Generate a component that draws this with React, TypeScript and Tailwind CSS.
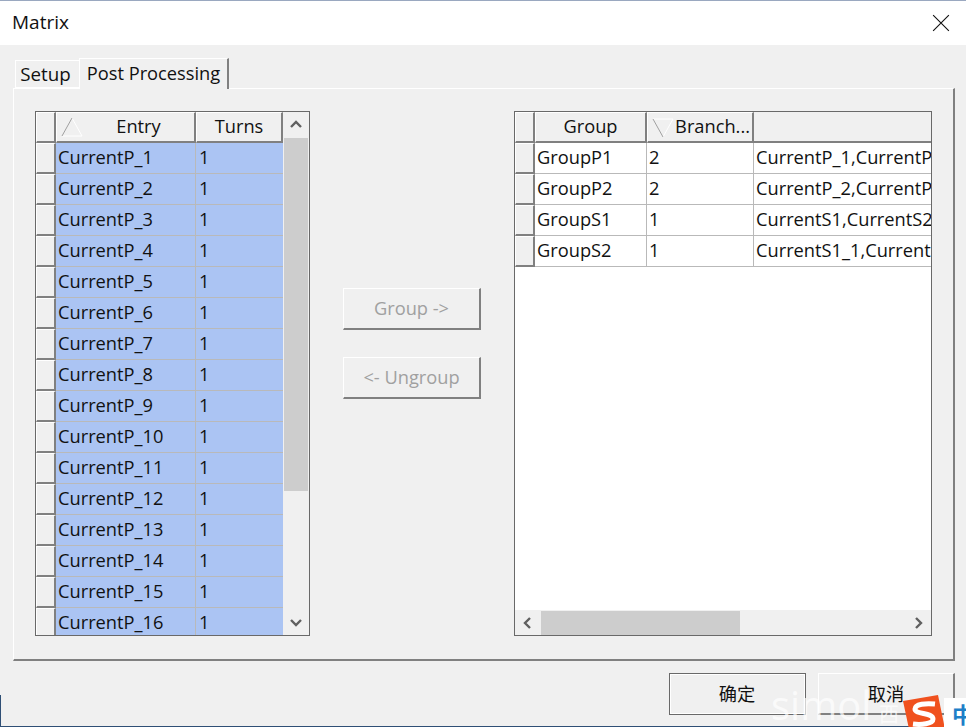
import React from 'react';

const FONT = { fontFamily: '"Open Sans", "Noto Sans CJK SC", sans-serif' };

const entries = Array.from({ length: 16 }, (_, i) => `CurrentP_${i + 1}`);

const groups = [
  { name: 'GroupP1', branches: '2', items: 'CurrentP_1,CurrentP_1_1' },
  { name: 'GroupP2', branches: '2', items: 'CurrentP_2,CurrentP_2_1' },
  { name: 'GroupS1', branches: '1', items: 'CurrentS1,CurrentS2,CurrentS3' },
  { name: 'GroupS2', branches: '1', items: 'CurrentS1_1,CurrentS2_1' },
];

const raised = 'border border-t-white border-l-white border-r-[#808080] border-b-[#808080] bg-[#f0f0f0]';

const Chevron = ({ dir }: { dir: 'up' | 'down' | 'left' | 'right' }) => {
  const d = {
    up: 'M2 9 L7 4 L12 9',
    down: 'M2 5 L7 10 L12 5',
    left: 'M9 2 L4 7 L9 12',
    right: 'M5 2 L10 7 L5 12',
  }[dir];
  return (
    <svg width="14" height="14" viewBox="0 0 14 14" fill="none">
      <path d={d} stroke="#606060" strokeWidth="2.4" />
    </svg>
  );
};

const SortUp = () => (
  <svg width="22" height="20" viewBox="0 0 22 20" fill="none">
    <path d="M11 1 L21 19 L1 19" stroke="#ffffff" />
    <path d="M11 1 L1 19" stroke="#a0a0a0" />
  </svg>
);

const SortDown = () => (
  <svg width="22" height="20" viewBox="0 0 22 20" fill="none">
    <path d="M1 1 L21 1 L11 19" stroke="#ffffff" />
    <path d="M1 1 L11 19" stroke="#a0a0a0" />
  </svg>
);

const SogouLogo = () => (
  <svg width="44" height="34" viewBox="0 0 44 34">
    <path d="M1 6 L36 0 L43 34 L7 34 Z" fill="#f0511e" />
    <path d="M33 9 C24 8 13 9 13 14 C13 20 31 17 31 24 C31 29 19 30 11 29" fill="none" stroke="#ffffff" strokeWidth="5" />
  </svg>
);

const HeaderCell = ({ width, children }: { width: string; children?: React.ReactNode }) => (
  <div className={`${width} h-full flex items-center justify-center pb-[2px] shrink-0 border-r-2 border-b-2 border-r-[#808080] border-b-[#808080] border-t border-l border-t-white border-l-white`}>
    {children}
  </div>
);

const RowHeader = () => (
  <div className="w-5 h-[31px] shrink-0 bg-[#f0f0f0] border-t border-l border-t-white border-l-white border-r-2 border-b-2 border-r-[#808080] border-b-[#808080]" />
);

export default function App() {
  return (
    <div className="relative w-full h-[727px] overflow-hidden bg-[#f0f0f0] text-[18.25px] text-[#111]" style={FONT}>
      <div className="h-[45px] bg-white border-t border-t-[#9aa8c0] flex items-center justify-between pl-[12px] pr-[16px]">
        <span className="text-[19px] pb-[2px]">Matrix</span>
        <svg width="18" height="18" viewBox="0 0 16 16" fill="none">
          <path d="M1 1 L15 15 M15 1 L1 15" stroke="#111" />
        </svg>
      </div>

      <div className="pr-[11px] pt-[13px] pl-[13px]">
        <div className="flex items-end h-[30px] pl-[2px]">
          <div className="w-[64px] h-[28px] pr-[4px] text-[18.75px] bg-[#f0f0f0] border-t border-l border-t-white border-l-white flex items-center justify-center border-b border-b-white">
            Setup
          </div>
          <div className="w-[150px] h-[31px] -mb-px pb-[3px] relative z-10 bg-[#f0f0f0] border-t border-l border-r-2 border-t-white border-l-white border-r-[#808080] flex items-center justify-center">
            Post Processing
          </div>
        </div>

        <div className="h-[573px] w-[942px] flex justify-between border border-t-white border-l-white border-r-2 border-b-2 border-r-[#808080] border-b-[#808080] pt-[22px] pl-[21px] pr-[21px]">
          {/* entries table */}
          <div className="w-[275px] h-[525px] border border-[#696969] flex overflow-hidden">
            <div className="w-[247px] flex flex-col">
              <div className="flex h-[31px] shrink-0">
                <HeaderCell width="w-5" />
                <div className="w-[140px] relative flex items-center justify-center pl-[26px] pb-[2px] border-t border-l border-t-white border-l-white border-r-2 border-b-2 border-r-[#808080] border-b-[#808080]">
                  <span className="absolute left-[4px] top-[4px]"><SortUp /></span>
                  Entry
                </div>
                <HeaderCell width="w-[87px]">Turns</HeaderCell>
              </div>
              {entries.map((name) => (
                <div key={name} className="flex h-[31px] shrink-0">
                  <RowHeader />
                  <div className="w-[140px] bg-[#abc4f3] border-r border-b border-[#b9b9b9] pl-[2px] pb-[2px] flex items-center">{name}</div>
                  <div className="w-[87px] bg-[#abc4f3] border-b border-[#b9b9b9] pl-[3px] pb-[2px] flex items-center">1</div>
                </div>
              ))}
            </div>
            <div className="w-[26px] flex flex-col items-center bg-[#f0f0f0]">
              <div className="h-[26px] w-full flex items-center justify-center shrink-0"><Chevron dir="up" /></div>
              <div className="w-[24px] h-[353px] bg-[#cdcdcd] shrink-0" />
              <div className="flex-1" />
              <div className="h-[27px] w-full flex items-center justify-center shrink-0"><Chevron dir="down" /></div>
            </div>
          </div>

          {/* group buttons */}
          <div className="flex flex-col gap-[27px] pt-[177px] text-[#a0a0a0]">
            <div className={`${raised} w-[138px] h-[42px] pb-[2px] flex items-center justify-center border-r-2 border-b-2`}>Group -&gt;</div>
            <div className={`${raised} w-[138px] h-[42px] pb-[2px] flex items-center justify-center border-r-2 border-b-2`}>&lt;- Ungroup</div>
          </div>

          {/* groups table */}
          <div className="w-[418px] h-[525px] border border-[#696969] bg-white flex flex-col overflow-hidden">
            <div className="flex h-[31px] shrink-0 bg-[#f0f0f0]">
              <HeaderCell width="w-5" />
              <HeaderCell width="w-[112px]">Group</HeaderCell>
              <div className="w-[107px] relative flex items-center justify-end pr-[2px] pb-[2px] border-t border-l border-t-white border-l-white border-r-2 border-b-2 border-r-[#808080] border-b-[#808080]">
                <span className="absolute left-[4px] top-[5px]"><SortDown /></span>
                Branch...
              </div>
              <div className="flex-1 border-b-2 border-b-[#808080]" />
            </div>
            {groups.map((g) => (
              <div key={g.name} className="flex h-[31px] shrink-0">
                <RowHeader />
                <div className="w-[112px] border-r border-b border-[#b9b9b9] pl-[2px] pb-[2px] flex items-center">{g.name}</div>
                <div className="w-[107px] border-r border-b border-[#b9b9b9] pl-[2px] pb-[2px] flex items-center">{g.branches}</div>
                <div className="flex-1 min-w-0 border-b border-[#b9b9b9] pl-[2px] pb-[2px] flex items-center overflow-hidden whitespace-nowrap">{g.items}</div>
              </div>
            ))}
            <div className="flex-1" />
            <div className="h-[25px] shrink-0 flex items-center bg-[#f0f0f0]">
              <div className="w-[26px] flex items-center justify-center"><Chevron dir="left" /></div>
              <div className="w-[199px] h-[24px] bg-[#cdcdcd]" />
              <div className="flex-1" />
              <div className="w-[26px] flex items-center justify-center"><Chevron dir="right" /></div>
            </div>
          </div>
        </div>

        <div className="flex justify-end gap-[12px] pt-[12px]">
          <div className="w-[137px] h-[42px] flex items-center justify-center border border-[#696969] border-r-2 border-b-2 outline outline-white -outline-offset-2">确定</div>
          <div className={`${raised} w-[137px] h-[42px] flex items-center justify-center border-r-2 border-b-2`}>取消</div>
        </div>
      </div>

      {/* window edge behind the dialog */}
      <div className="absolute left-0 bottom-0 w-px h-[32px] bg-[#2f4f75]" />
      <div className="absolute left-0 right-0 bottom-0 h-px bg-[#2f4f75]" />

      {/* watermark and input method badge */}
      <div className="absolute left-[771px] top-[680px] text-[40px] leading-[50px] text-white/70">simol</div>
      <div className="absolute left-[879px] top-[704px] text-[20px] leading-[22px] text-white/70">西</div>
      <div className="absolute left-[902px] top-[695px]"><SogouLogo /></div>
      <div className="absolute left-[944px] top-[698px] w-[22px] h-[29px] bg-white text-[#1e7fc8] font-bold text-[22px] pl-[8px] leading-[32px] whitespace-nowrap overflow-hidden">中</div>
    </div>
  );
}
